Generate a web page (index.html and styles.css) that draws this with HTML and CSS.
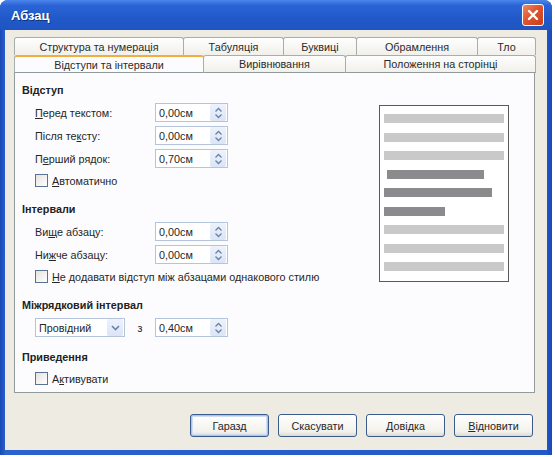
FILE: index.html
```html
<!DOCTYPE html>
<html lang="uk">
<head>
    <meta charset="UTF-8">
    <meta name="viewport" content="width=device-width, initial-scale=1.0">
    <title>Абзац</title>
    <link rel="stylesheet" href="styles.css">
</head>
<body>
<div class="window">
    <div class="titlebar">
        <span class="title">Абзац</span>
        <button class="close" type="button">
            <svg width="12" height="12" viewBox="0 0 12 12"><path d="M2 2 10 10M10 2 2 10" stroke="#fff" stroke-width="2.4" stroke-linecap="round"/></svg>
        </button>
    </div>

    <div class="client">
        <!-- two rows of tabs, the row with the open tab sits in front -->
        <div class="tabs">
            <div class="tab-row back">
                <div class="tab">Структура та нумерація</div>
                <div class="tab">Табуляція</div>
                <div class="tab">Буквиці</div>
                <div class="tab">Обрамлення</div>
                <div class="tab">Тло</div>
            </div>
            <div class="tab-row front">
                <div class="tab active">Відступи та інтервали</div>
                <div class="tab">Вирівнювання</div>
                <div class="tab">Положення на сторінці</div>
            </div>
        </div>

        <div class="panel">
            <div class="settings">
                <div class="group">
                    <div class="group-title">Відступ</div>
                    <div class="row">
                        <label class="field-label"><u>П</u>еред текстом:</label>
                        <div class="spin-input"><span class="value">0,00см</span><span class="spin"><svg width="9" height="12" viewBox="0 0 9 12"><path d="M1.5 4.5 4.5 1.5 7.5 4.5M1.5 7.5 4.5 10.5 7.5 7.5" fill="none" stroke="#6b82a8" stroke-width="1.3"/></svg></span></div>
                    </div>
                    <div class="row">
                        <label class="field-label">Після те<u>к</u>сту:</label>
                        <div class="spin-input"><span class="value">0,00см</span><span class="spin"><svg width="9" height="12" viewBox="0 0 9 12"><path d="M1.5 4.5 4.5 1.5 7.5 4.5M1.5 7.5 4.5 10.5 7.5 7.5" fill="none" stroke="#6b82a8" stroke-width="1.3"/></svg></span></div>
                    </div>
                    <div class="row">
                        <label class="field-label">П<u>е</u>рший рядок:</label>
                        <div class="spin-input"><span class="value">0,70см</span><span class="spin"><svg width="9" height="12" viewBox="0 0 9 12"><path d="M1.5 4.5 4.5 1.5 7.5 4.5M1.5 7.5 4.5 10.5 7.5 7.5" fill="none" stroke="#6b82a8" stroke-width="1.3"/></svg></span></div>
                    </div>
                    <div class="check-row"><span class="box"></span><span><u>А</u>втоматично</span></div>
                </div>

                <div class="group">
                    <div class="group-title">Інтервали</div>
                    <div class="row">
                        <label class="field-label">Ви<u>щ</u>е абзацу:</label>
                        <div class="spin-input"><span class="value">0,00см</span><span class="spin"><svg width="9" height="12" viewBox="0 0 9 12"><path d="M1.5 4.5 4.5 1.5 7.5 4.5M1.5 7.5 4.5 10.5 7.5 7.5" fill="none" stroke="#6b82a8" stroke-width="1.3"/></svg></span></div>
                    </div>
                    <div class="row">
                        <label class="field-label">Ни<u>ж</u>че абзацу:</label>
                        <div class="spin-input"><span class="value">0,00см</span><span class="spin"><svg width="9" height="12" viewBox="0 0 9 12"><path d="M1.5 4.5 4.5 1.5 7.5 4.5M1.5 7.5 4.5 10.5 7.5 7.5" fill="none" stroke="#6b82a8" stroke-width="1.3"/></svg></span></div>
                    </div>
                    <div class="check-row"><span class="box"></span><span><u>Н</u>е додавати відступ між абзацами однакового стилю</span></div>
                </div>

                <div class="group">
                    <div class="group-title">Міжрядковий інтервал</div>
                    <div class="row">
                        <div class="select"><span class="value">Провідний</span><span class="drop"><svg width="9" height="6" viewBox="0 0 9 6"><path d="M1 1 4.5 4.5 8 1" fill="none" stroke="#6b82a8" stroke-width="1.6"/></svg></span></div>
                        <span class="by">з</span>
                        <div class="spin-input"><span class="value">0,40см</span><span class="spin"><svg width="9" height="12" viewBox="0 0 9 12"><path d="M1.5 4.5 4.5 1.5 7.5 4.5M1.5 7.5 4.5 10.5 7.5 7.5" fill="none" stroke="#6b82a8" stroke-width="1.3"/></svg></span></div>
                    </div>
                </div>

                <div class="group">
                    <div class="group-title">Приведення</div>
                    <div class="check-row"><span class="box"></span><span>А<u>к</u>тивувати</span></div>
                </div>
            </div>

            <!-- page thumbnail: grey lines around the current paragraph -->
            <div class="preview">
                <div class="line"></div>
                <div class="line"></div>
                <div class="line"></div>
                <div class="line dark first"></div>
                <div class="line dark mid"></div>
                <div class="line dark last"></div>
                <div class="line"></div>
                <div class="line"></div>
                <div class="line"></div>
            </div>
        </div>

        <div class="buttons">
            <button type="button" class="btn default">Гаразд</button>
            <button type="button" class="btn">Скасувати</button>
            <button type="button" class="btn"><u>Д</u>овідка</button>
            <button type="button" class="btn"><u>В</u>ідновити</button>
        </div>
    </div>
</div>
</body>
</html>
```

FILE: styles.css
```css
* {
    box-sizing: border-box;
}

body {
    margin: 0;
    background-color: #ffffff;
    font-family: "Liberation Sans", Arial, sans-serif;
    font-size: 10.8px;
    color: #262626;
}

.window {
    width: 552px;
    height: 455px;
    display: flex;
    flex-direction: column;
    background: linear-gradient(90deg, #1a49b4 0%, #2a62cf 1%, #2159c6 99%, #1a49b4 100%);
    border-radius: 8px 8px 0 0;
    overflow: hidden;
}

.titlebar {
    height: 30px;
    flex: none;
    display: flex;
    align-items: center;
    justify-content: space-between;
    padding: 0 8px 0 11px;
    background: linear-gradient(#4a86ec 0%, #2a64d6 18%, #2159c9 60%, #1f55c2 100%);
}

.title {
    color: #ffffff;
    font-weight: bold;
    font-size: 13px;
    text-shadow: 1px 1px 0 #10307a;
}

.close {
    width: 22px;
    height: 22px;
    padding: 0;
    display: flex;
    align-items: center;
    justify-content: center;
    border: 1px solid #ffffff;
    border-radius: 3px;
    background: linear-gradient(135deg, #ec8a6c 0%, #df5430 45%, #c93d17 100%);
}

.client {
    flex: 1;
    margin: 0 5px 5px;
    padding: 7px 12px 0 9px;
    background-color: #eeece2;
    display: flex;
    flex-direction: column;
}

/* tabs */

.tab-row {
    display: grid;
    height: 18px;
}

.tab-row.back {
    grid-template-columns: 169px 100px 73px 121px 58px;
}

.tab-row.front {
    grid-template-columns: 189px 142px 190px;
}

.tab {
    display: flex;
    align-items: center;
    justify-content: center;
    border: 1px solid #a7aeae;
    border-bottom: none;
    border-radius: 3px 3px 0 0;
    background: linear-gradient(#fefefe, #f1f0ea);
    color: #2a2a2a;
    margin-right: -1px;
}

.tab-row.front .tab {
    border-bottom: 1px solid #919b9c;
}

.tab.active {
    background-color: #fcfcfe;
    background-image: none;
    border-top: 2px solid #efae3f;
    border-bottom: none;
}

.panel {
    height: 320px;
    flex: none;
    display: flex;
    border: 1px solid #919b9c;
    border-top: none;
    background-color: #fcfcfe;
}

/* left side: form groups */

.settings {
    flex: 1;
    padding: 9px 0 0 7px;
}

.group {
    margin-bottom: 10px;
}

.group-title {
    height: 16px;
    line-height: 16px;
    margin-bottom: 3px;
    font-weight: bold;
    color: #222;
}

.row {
    height: 23px;
    display: flex;
    align-items: center;
    padding-left: 13px;
}

.field-label {
    width: 120px;
}

.spin-input,
.select {
    height: 19px;
    display: flex;
    align-items: center;
    border: 1px solid #b3c4dc;
    background-color: #ffffff;
}

.spin-input {
    width: 73px;
}

.spin-input .value,
.select .value {
    flex: 1;
    padding-left: 3px;
}

.spin,
.drop {
    width: 16px;
    height: 17px;
    margin-right: 1px;
    display: flex;
    align-items: center;
    justify-content: center;
    background: linear-gradient(#edf2fc, #dbe5f7);
    border-radius: 2px;
}

.select {
    width: 90px;
}

.by {
    width: 30px;
    text-align: center;
}

.check-row {
    height: 21px;
    display: flex;
    align-items: center;
    gap: 4px;
    padding-left: 13px;
}

.box {
    width: 13px;
    height: 13px;
    border: 1px solid #5a7296;
    background: linear-gradient(135deg, #e4e3dd, #ffffff);
}

/* right side: thumbnail of the page */

.preview {
    width: 130px;
    height: 177px;
    margin: 32px 25px 0 0;
    padding: 8px 4px 0 4px;
    border: 1px solid #5a5a5a;
    background-color: #ffffff;
    display: flex;
    flex-direction: column;
    gap: 9.5px;
}

.line {
    height: 9px;
    background-color: #c9c9c9;
}

.line.dark {
    background-color: #8b8b8d;
}

.line.first {
    margin-left: 3px;
    width: 97px;
}

.line.mid {
    width: 108px;
}

.line.last {
    width: 61px;
}

/* dialog buttons */

.buttons {
    display: flex;
    justify-content: flex-end;
    gap: 9px;
    margin-top: 21px;
    padding-right: 2px;
}

.btn {
    width: 79px;
    height: 23px;
    padding: 0;
    font-family: "Liberation Sans", Arial, sans-serif;
    font-size: 10.8px;
    color: #262626;
    border: 1px solid #3a5b8c;
    border-radius: 3px;
    background: linear-gradient(#ffffff, #f2f1ea 80%, #dcd9cc);
}

.btn.default {
    box-shadow: inset 0 0 0 1px #a9c3ec, inset 0 0 0 2px #d0ddf5;
}
```
